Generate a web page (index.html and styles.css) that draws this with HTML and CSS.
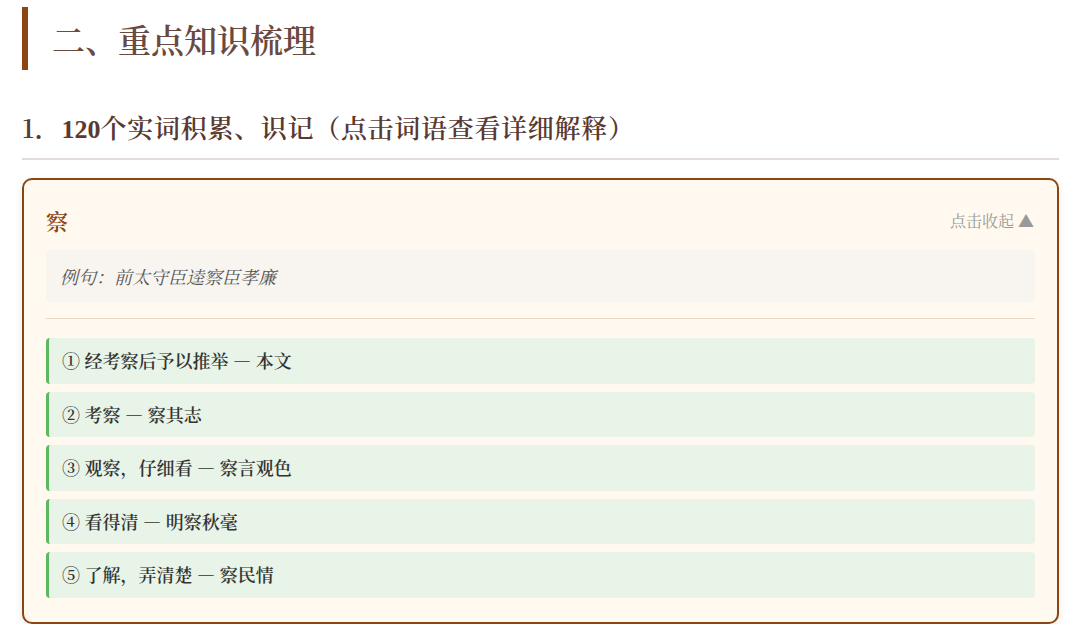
FILE: index.html
```html
<!DOCTYPE html>
<html lang="zh-CN">
<head>
<meta charset="utf-8">
<title>重点知识梳理</title>
<link rel="stylesheet" href="styles.css">
</head>
<body>
  <h2 class="section-title">二、重点知识梳理</h2>
  <h3 class="sub-title">1．<span class="latin">120</span>个实词积累、识记（点击词语查看详细解释）</h3>
  <div class="word-card">
    <div class="card-head">
      <span class="word">察</span>
      <span class="toggle">点击收起 ▲</span>
    </div>
    <div class="example">例句：前太守臣逵察臣孝廉</div>
    <div class="divider"></div>
    <ul class="meanings">
      <li>① 经考察后予以推举 — 本文</li>
      <li>② 考察 — 察其志</li>
      <li>③ 观察，仔细看 — 察言观色</li>
      <li>④ 看得清 — 明察秋毫</li>
      <li>⑤ 了解，弄清楚 — 察民情</li>
    </ul>
  </div>
</body>
</html>
```
FILE: styles.css
```css
html, body {
  margin: 0;
  padding: 0;
  background: #ffffff;
}
body {
  padding: 0 21px 0 22px;
  font-family: "Noto Serif CJK SC", "Liberation Serif", "Noto Sans CJK SC", serif;
  color: #333;
}
.section-title {
  margin: 7px 0 0;
  height: 63px;
  line-height: 63px;
  border-left: 6px solid #8b4513;
  padding-left: 24px;
  font-size: 33px;
  font-weight: 600;
  color: #6a4a40;
}
.sub-title {
  margin: 38px 0 0;
  height: 38px;
  line-height: 38px;
  padding-bottom: 12px;
  border-bottom: 2px solid #e4dcd8;
  font-size: 26px;
  font-weight: 600;
  color: #5a3a30;
  letter-spacing: 0.7px;
}
.sub-title .latin {
  font-family: "Liberation Serif", serif;
  font-weight: 700;
  line-height: 1;
  letter-spacing: 0;
}
.word-card {
  margin-top: 18px;
  border: 2px solid #8b4513;
  border-radius: 10px;
  background: #fff9ef;
  padding: 20px 22px 24px;
  box-shadow: 0 3px 10px rgba(0, 0, 0, 0.08);
}
.card-head {
  display: flex;
  align-items: center;
  justify-content: space-between;
  height: 40px;
  margin-bottom: 10px;
}
.word {
  font-size: 22px;
  font-weight: 600;
  color: #8b4513;
}
.toggle {
  font-size: 16px;
  color: #999;
  padding-right: 1px;
}
.example {
  background: #f8f5f1;
  border-radius: 4px;
  padding: 14px 14px;
  line-height: 24px;
  font-size: 18px;
  font-style: italic;
  color: #555;
}
.divider {
  height: 1px;
  background: #e8d8c8;
  margin: 16px 0 19px;
}
.meanings {
  list-style: none;
  margin: 0;
  padding: 0;
  display: flex;
  flex-direction: column;
  gap: 8px;
}
.meanings li {
  background: #e8f4e8;
  border-left: 3px solid #5cb85c;
  border-radius: 4px;
  padding: 11px 13px;
  line-height: 23.6px;
  font-size: 18px;
  font-weight: 600;
  color: #333;
}
```
